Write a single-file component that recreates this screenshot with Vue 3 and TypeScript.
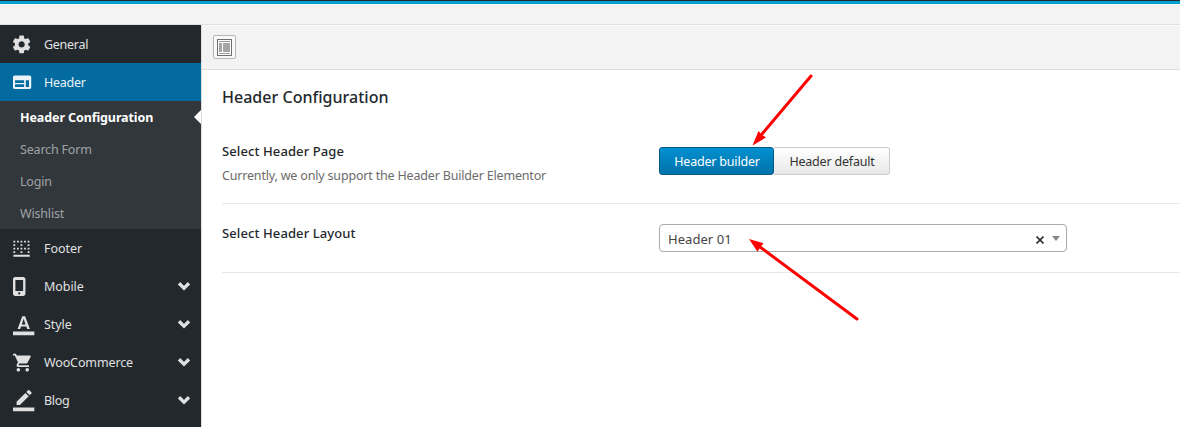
<script setup lang="ts">
import { ref } from 'vue'

interface MenuItem {
  label: string
  path: string
  viewBox: string
  track: string
  active?: boolean
  children?: { label: string; track: string }[]
  expandable?: boolean
}

const menu: MenuItem[] = [
  {
    label: 'General',
    track: 't-tight',
    viewBox: '2.3 0.3 24 24',
    path: 'M19.43 12.98c.04-.32.07-.64.07-.98s-.03-.66-.07-.98l2.11-1.65c.19-.15.24-.42.12-.64l-2-3.46c-.12-.22-.39-.3-.61-.22l-2.49 1c-.52-.4-1.08-.73-1.69-.98l-.38-2.65C14.46 2.18 14.25 2 14 2h-4c-.25 0-.46.18-.49.42l-.38 2.65c-.61.25-1.17.59-1.69.98l-2.49-1c-.23-.09-.49 0-.61.22l-2 3.46c-.13.22-.07.49.12.64l2.11 1.65c-.04.32-.07.65-.07.98s.03.66.07.98l-2.11 1.65c-.19.15-.24.42-.12.64l2 3.46c.12.22.39.3.61.22l2.49-1c.52.4 1.08.73 1.69.98l.38 2.65c.03.24.24.42.49.42h4c.25 0 .46-.18.49-.42l.38-2.65c.61-.25 1.17-.59 1.69-.98l2.49 1c.23.09.49 0 .61-.22l2-3.46c.12-.22.07-.49-.12-.64l-2.11-1.65zM12 15.5c-1.93 0-3.5-1.57-3.5-3.5s1.57-3.5 3.5-3.5 3.5 1.57 3.5 3.5-1.57 3.5-3.5 3.5z',
  },
  {
    label: 'Header',
    track: 't-tight',
    viewBox: '2 0 24 24',
    active: true,
    path: 'M20 3.8H4c-1.1 0-1.99.9-1.99 2L2 17.200c0 1.100.9 2 2 2h16.500c1.100 0 2-.9 2-2V5.800c0-1.100-.9-2-2-2zm-5.500 13.200H4.300v-3.200h10.200v3.200zm0-4.600H4.300V9.200h10.200v3.200zm5.500 4.600h-3.600V9.200H20v7.800z',
    children: [
      { label: 'Header Configuration', track: 't-hc' },
      { label: 'Search Form', track: 't-sub' },
      { label: 'Login', track: 't-sub' },
      { label: 'Wishlist', track: 't-sub' },
    ],
  },
  {
    label: 'Footer',
    track: 't-wide',
    viewBox: '3 0 23 24',
    path: 'M9 11H7v2h2v-2zm4 4h-2v2h2v-2zM9 3H7v2h2V3zm4 8h-2v2h2v-2zM5 3H3v2h2V3zm8 4h-2v2h2V7zm4 4h-2v2h2v-2zm-4-8h-2v2h2V3zm4 0h-2v2h2V3zm2 10h2v-2h-2v2zm0 4h2v-2h-2v2zM5 7H3v2h2V7zm14-4v2h2V3h-2zm0 6h2V7h-2v2zM5 11H3v2h2v-2zM3 21.200h18.300v-2.300H3zm2-6.200H3v2h2v-2z',
  },
  {
    label: 'Mobile',
    track: 't-wide',
    viewBox: '5 0 24 24',
    path: 'M16.500 1h-9C6.120 1 5 2.120 5 3.500v16.500C5 21.380 6.120 22.500 7.500 22.500h9c1.380 0 2.500-1.120 2.500-2.500v-16.500C19 2.120 17.880 1 16.500 1zM12 20.800a1.200 1.200 0 1 1 0-2.400 1.200 1.200 0 0 1 0 2.400zM16.400 16.800H7.700V4.500h8.700z',
    expandable: true,
  },
  {
    label: 'Style',
    track: 't-wide',
    viewBox: '0 0 24 24',
    path: 'M0 19.700h24v4.100H0zM10.400 2.500L5.200 17h2.900l1-3h5.900l1 3h3L13.600 2.500zM9.900 11.700L12 5.400l2.100 6.300z',
    expandable: true,
  },
  {
    label: 'WooCommerce',
    track: 't-woo',
    viewBox: '1 0 24 24',
    path: 'M7 18c-1.100 0-1.990.9-1.990 2S5.900 22 7 22s2-.9 2-2-.9-2-2-2zM1 2v2h2l3.600 7.590-1.350 2.450c-.16.28-.25.61-.25.96 0 1.100.9 2 2 2h12v-2H7.420c-.14 0-.25-.11-.25-.25l.03-.12.9-1.630h7.450c.75 0 1.410-.41 1.750-1.030l3.580-6.490c.08-.14.12-.31.12-.48 0-.55-.45-1-1-1H5.210l-.94-2H1zm16 16c-1.100 0-1.990.9-1.990 2s.89 2 1.990 2 2-.9 2-2-.9-2-2-2z',
    expandable: true,
  },
  {
    label: 'Blog',
    track: 't-tight',
    viewBox: '0 0 24 24',
    path: 'M17.750 7L14 3.250l-10 10V17h3.750l10-10zm2.960-2.960c.39-.39.39-1.020 0-1.410L18.370.290c-.39-.39-1.020-.39-1.410 0L15 2.250 18.750 6l1.960-1.960zM0 19.700h24v4.100H0z',
    expandable: true,
  },
]

const options = ['Header builder', 'Header default']
const selected = ref(0)
</script>

<template>
  <div class="page">
    <div class="topline"></div>
    <div class="topgap"></div>
    <div class="body">
      <nav class="sidebar">
        <template v-for="item in menu" :key="item.label">
          <a class="item" :class="{ active: item.active }">
            <svg class="icon" :viewBox="item.viewBox" width="21.33" height="21.33" overflow="visible">
              <path :d="item.path" />
            </svg>
            <span :class="item.track">{{ item.label }}</span>
            <svg v-if="item.expandable" class="chevron" viewBox="0 0 14 10" width="14" height="10">
              <path d="M2 2.300 7 7.200 12 2.300" />
            </svg>
          </a>
          <div v-if="item.children" class="submenu">
            <a v-for="(child, i) in item.children" :key="child.label" class="sub" :class="{ current: i === 0 }">
              <span :class="child.track">{{ child.label }}</span>
            </a>
          </div>
        </template>
      </nav>
      <main class="main">
        <div class="toolbar">
          <button class="expand" type="button">
            <svg width="15" height="17" viewBox="0 0 15 17">
              <rect x=".5" y=".5" width="14" height="16" fill="#fff" stroke="#6e6e6e" />
              <path d="M2 2.500h11M2 14.500h11" stroke="#999" />
              <path d="M2 4h3v9H2zM6 4h7v9H6z" fill="#a5a5a5" />
            </svg>
          </button>
        </div>
        <section class="content">
          <h2>Header Configuration</h2>
          <div class="row first">
            <div class="label">
              <div class="title">Select Header Page</div>
              <div class="desc">Currently, we only support the Header Builder Elementor</div>
            </div>
            <div class="buttons">
              <button
                v-for="(o, i) in options"
                :key="o"
                type="button"
                :class="{ on: selected === i }"
                @click="selected = i"
              >{{ o }}</button>
            </div>
          </div>
          <div class="row second">
            <div class="label">
              <div class="title">Select Header Layout</div>
            </div>
            <div class="select">
              <span class="value">Header 01</span>
              <svg class="clear" width="8" height="8" viewBox="0 0 8 8"><path d="M.5.5 7.500 7.500M7.500.5.5 7.500" /></svg>
              <svg class="caret" width="8" height="5" viewBox="0 0 8 5"><path d="M0 0h8L4 5z" /></svg>
            </div>
          </div>
        </section>
      </main>
    </div>
    <svg class="arrows" width="1180" height="427" viewBox="0 0 1180 427">
      <path class="shaft" d="M811 76 762 134M857 319 760 247" />
      <path d="M752.500 145.500 758.500 131 761.500 134.500 766 137.500ZM749 239 763.500 243.200 760.500 247 757.500 251.800Z" />
    </svg>
  </div>
</template>

<style>
body { margin: 0; }
</style>

<style scoped>
.page {
  position: relative;
  width: 1180px;
  height: 427px;
  overflow: hidden;
  background: #fff;
  font-family: "Noto Sans", "Open Sans", sans-serif;
  font-size: 13px;
  color: #23282d;
}
.topline { height: 3px; border-top: 1px solid #23282d; background: #00a0d2; }
.topgap {
  height: 19px;
  border-top: 1px solid #fff;
  border-bottom: 1px solid #dedede;
  background: #f3f3f3;
}
.body { display: flex; height: 402px; }
.sidebar { width: 201px; background: #23282d; border-right: 1px solid #ddd; flex: none; }
.item {
  display: flex;
  align-items: center;
  height: 38px;
  padding: 0 10px 0 13px;
  color: #e0e0e0;
  font-size: 12.500px;
}
.item.active { background: #036b9f; color: #eaf3f8; }
.icon { fill: currentColor; flex: none; margin: 2px 9.670px 0 0; }
.chevron { margin-left: auto; fill: none; stroke: #e0e0e0; stroke-width: 3.300; }
.t-tight { letter-spacing: -0.28px; }
.t-wide { letter-spacing: -0.05px; }
.t-woo { letter-spacing: -0.12px; }
.submenu { background: #32373c; }
.sub {
  position: relative;
  display: flex;
  align-items: center;
  height: 32px;
  padding-left: 20px;
  color: #9fa3a6;
  font-size: 12.500px;
}
.t-sub { letter-spacing: -0.18px; }
.t-hc { letter-spacing: -0.1px; }
.current { color: #fff; font-weight: 700; }
.current::after {
  content: "";
  position: absolute;
  right: 0;
  top: 9px;
  border: 7px solid transparent;
  border-left: 0;
  border-right-color: #fff;
}
.main { flex: 1; min-width: 0; }
.toolbar {
  box-sizing: border-box;
  height: 45px;
  padding: 9px 11px;
  background: #f3f3f3;
  border-top: 1px solid #fbfbfb;
  border-bottom: 1px solid #dedede;
}
.expand {
  display: flex;
  align-items: center;
  justify-content: center;
  box-sizing: border-box;
  width: 23px;
  height: 24px;
  padding: 0;
  border: 1px solid #b5b5b5;
  border-radius: 2px;
  background: #f9f9f9;
}
.content { padding-left: 20px; }
h2 {
  margin: 0;
  height: 54px;
  line-height: 54px;
  font-size: 16px;
  font-weight: 500;
  letter-spacing: 0.02px;
}
.row { display: flex; box-sizing: border-box; border-bottom: 1px solid #e7e7e7; }
.first { height: 80px; padding-top: 17px; }
.second { height: 69px; padding-top: 20px; }
.label { width: 437px; flex: none; }
.title { line-height: 20px; font-size: 13px; font-weight: 500; letter-spacing: 0.1px; }
.second .title { margin-top: -1px; }
.desc { margin-top: 5px; line-height: 20px; font-size: 12.500px; color: #6b6b6b; letter-spacing: -0.18px; }
.buttons { display: flex; margin-top: 6px; height: 28px; }
.buttons button {
  box-sizing: border-box;
  width: 116px;
  height: 28px;
  padding: 2px 0 0 1px;
  font: 12.500px/24px "Noto Sans", "Open Sans", sans-serif;
  letter-spacing: -0.2px;
  color: #333;
  border: 1px solid #ccc;
  border-left-width: 0;
  border-radius: 0 3px 3px 0;
  background: linear-gradient(#fff, #e8e8e8);
}
.buttons .on {
  width: 115px;
  color: #fff;
  border: 1px solid #045a85;
  border-radius: 3px;
  background: linear-gradient(#0390d0, #0073aa);
}
.select {
  display: flex;
  align-items: center;
  box-sizing: border-box;
  width: 408px;
  height: 28px;
  border: 1px solid #aaa;
  border-radius: 4px;
  padding: 0 6px 0 8px;
}
.value { flex: 1; padding-top: 2px; font-size: 13px; color: #444; letter-spacing: 0.05px; }
.clear { fill: none; stroke: #333; stroke-width: 1.700; margin: 3px 8px 0 0; }
.caret { fill: #888; }
.arrows { position: absolute; inset: 0; pointer-events: none; fill: #f00; }
.shaft { fill: none; stroke: #f00; stroke-width: 3; stroke-linecap: round; }
</style>
